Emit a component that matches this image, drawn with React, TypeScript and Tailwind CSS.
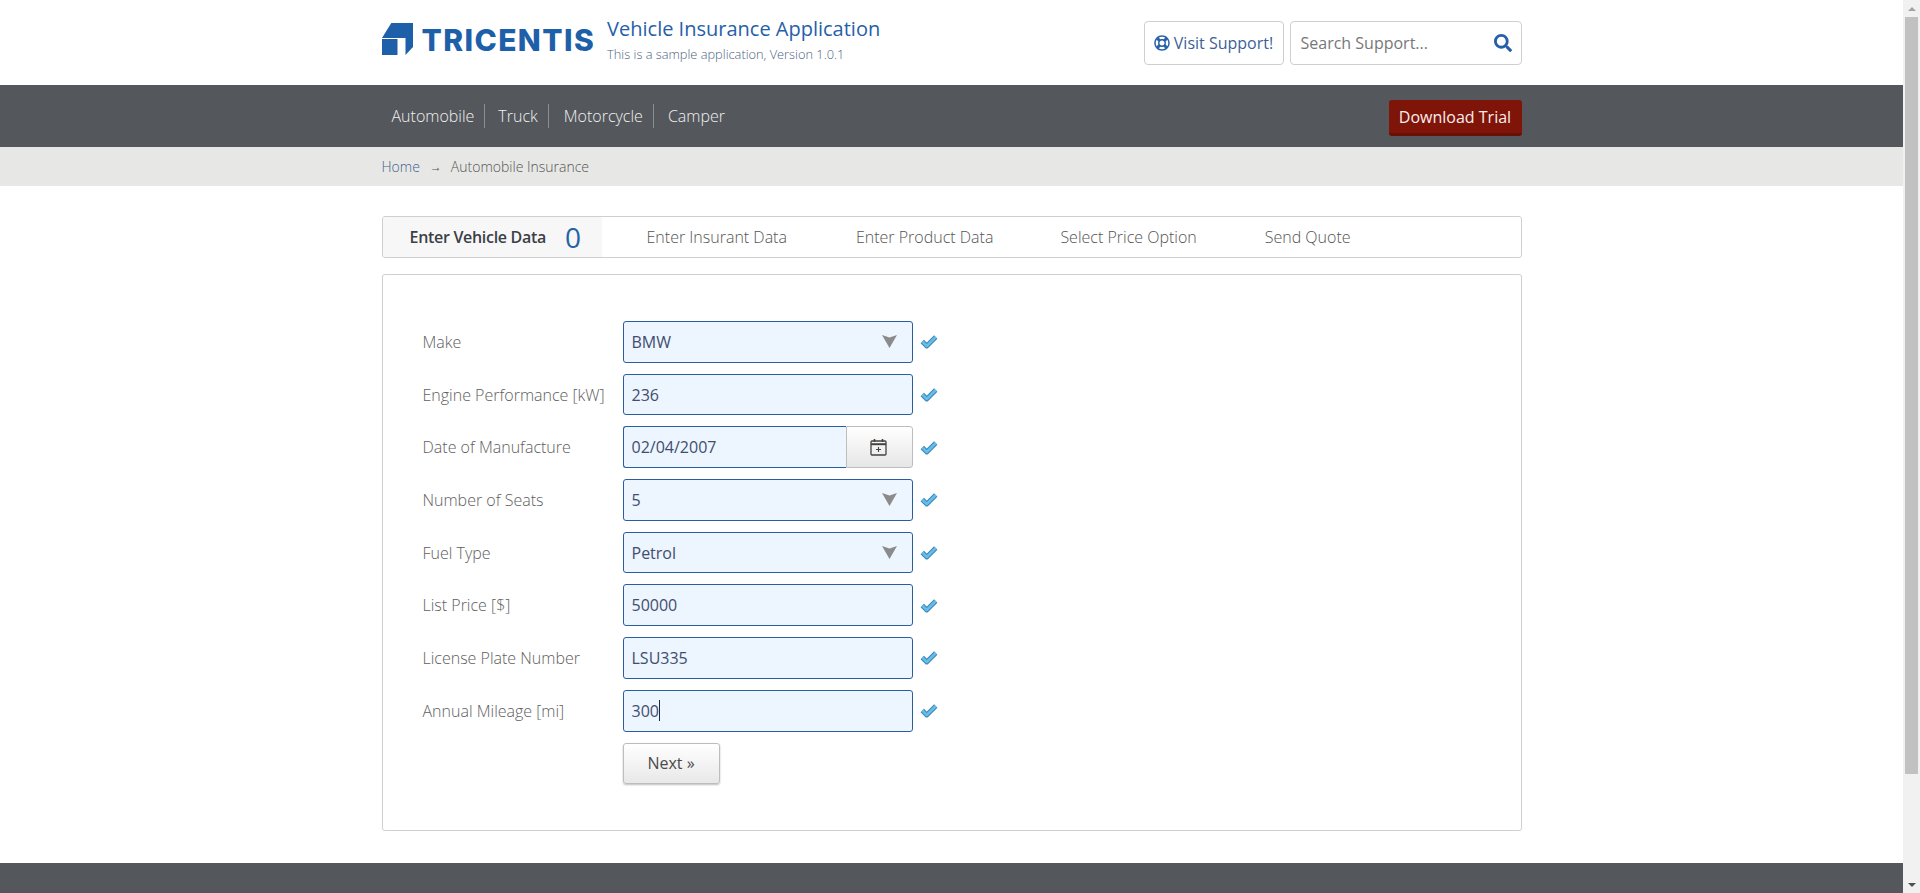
import React from 'react';
import { FaRegLifeRing, FaSearch } from 'react-icons/fa';

const tabs = [
  { label: 'Enter Insurant Data', cls: 'ml-[45px]' },
  { label: 'Enter Product Data', cls: 'ml-[69px]' },
  { label: 'Select Price Option', cls: 'ml-[67px]' },
  { label: 'Send Quote', cls: 'ml-[68px]' },
];

const CheckMark = () => (
  <svg width="18" height="15" viewBox="0 0 16 13" fill="none" strokeLinejoin="round" className="ml-[7px] shrink-0">
    <path d="M2 6.5 L6 10.5 L14 2.5" stroke="#3f87b5" strokeWidth="4.2" />
    <path d="M2 6.5 L6 10.5 L14 2.5" stroke="#66bdea" strokeWidth="2.2" />
  </svg>
);

const Arrow = () => (
  <svg width="15" height="13" viewBox="0 0 15 13" className="absolute right-[15px] top-[13px]">
    <path d="M0 0 L7.5 2.5 L15 0 L7.5 13 Z" fill="#8b8b8b" />
  </svg>
);

const CalendarIcon = () => (
  <svg width="17" height="18" viewBox="0 0 17 18" fill="none" stroke="#45423f">
    <rect x="1" y="3" width="15" height="14" rx="1" strokeWidth="1.3" />
    <path d="M1 6.2 H16" strokeWidth="2" />
    <path d="M4.5 1 V4 M12.5 1 V4" strokeWidth="1.6" />
    <path d="M8.5 9 V14 M6 11.5 H11" strokeWidth="1.1" />
  </svg>
);

const Label = ({ children }: { children: React.ReactNode }) => (
  <label className="w-[239px] shrink-0 pl-[39px] text-[16px] font-light text-[#5e5e5e]">{children}</label>
);

const fieldCls = 'relative flex h-[41.7px] w-[290px] items-center rounded-[3px] border border-[#2a5e9f] bg-[#edf5fe] pl-[8px] text-[16px] text-[#3f4e6e]';

const SelectRow = ({ label, value }: { label: string; value: string }) => (
  <div className="flex items-center">
    <Label>{label}</Label>
    <div className={fieldCls}>
      {value}
      <Arrow />
    </div>
    <CheckMark />
  </div>
);

const TextRow = ({ label, value, caret }: { label: string; value: string; caret?: boolean }) => (
  <div className="flex items-center">
    <Label>{label}</Label>
    <div className={fieldCls}>
      {value}
      {caret && <span className="h-[21px] w-px bg-[#1b2a44]" />}
    </div>
    <CheckMark />
  </div>
);

export default function App() {
  return (
    <div className="flex h-[893px] overflow-hidden bg-white font-['Open_Sans',sans-serif]">
      <div className="flex min-w-0 flex-1 flex-col">
        {/* Header */}
        <header className="h-[85px] shrink-0">
          <div className="mx-auto flex h-full w-[1140px] items-center justify-between">
            <div className="flex items-center pb-[6px]">
              <svg width="32" height="33" viewBox="0 0 32 33" className="shrink-0">
                <path d="M9.3 0 H31 V24 L23.5 32 V15 H0 Z" fill="#1e5fa9" />
                <rect x="0" y="16" width="15.5" height="16" fill="#1e5fa9" />
              </svg>
              <span className="ml-[8px] font-['Inter',sans-serif] text-[30px] leading-none font-extrabold tracking-[1.4px] text-[#1e5fa9]">TRICENTIS</span>
              <div className="mb-[2px] ml-[12px] flex flex-col">
                <span className="text-[20px] leading-[27px] text-[#2560a8]">Vehicle Insurance Application</span>
                <span className="mt-[4px] text-[12.8px] leading-[16px] font-light text-[#4d5f80]">This is a sample application, Version 1.0.1</span>
              </div>
            </div>
            <div className="flex items-center gap-[6px]">
              <a className="flex h-[44px] w-[140px] items-center justify-center gap-[4px] rounded-[4px] border border-[#cfcfcf] text-[16px] text-[#3d5f98]">
                <FaRegLifeRing className="text-[16px] text-[#2a62aa]" />
                Visit Support!
              </a>
              <div className="relative flex h-[44px] w-[232px] items-center rounded-[4px] border border-[#cfcfcf] pl-[10px] text-[16px] text-[#777777]">
                Search Support...
                <FaSearch className="absolute right-[9px] top-[12px] text-[18px] text-[#2560a8]" />
              </div>
            </div>
          </div>
        </header>

        {/* Nav */}
        <nav className="h-[62px] shrink-0 bg-[#54575c]">
          <div className="mx-auto flex h-full w-[1140px] items-center justify-between">
            <ul className="flex items-center pl-[10px] text-[16px] font-light text-[#f1f1f1]">
              <li className="flex h-[24px] items-center border-r border-[#8c8e91] pr-[10px]">Automobile</li>
              <li className="flex h-[24px] items-center border-r border-[#8c8e91] pr-[10px] pl-[13px]">Truck</li>
              <li className="flex h-[24px] items-center border-r border-[#8c8e91] pr-[10px] pl-[15px]">Motorcycle</li>
              <li className="flex h-[24px] items-center pl-[14px]">Camper</li>
            </ul>
            <button className="mt-[4px] h-[36px] w-[133px] rounded-[3px] border-b-[3px] border-[#6b0f05] bg-[#7f1408] text-[16px] text-[#fbeeee]">Download Trial</button>
          </div>
        </nav>

        {/* Breadcrumb */}
        <div className="h-[39px] shrink-0 bg-[#e7e7e5]">
          <div className="mx-auto flex h-full w-[1140px] items-center text-[14px] font-light">
            <span className="text-[#3e5f8e]">Home</span>
            <span className="ml-[10px] text-[12px] text-[#555555]">→</span>
            <span className="ml-[9px] text-[#555555]">Automobile Insurance</span>
          </div>
        </div>

        {/* Content */}
        <main className="mx-auto w-[1140px] flex-1 pt-[30px]">
          <div className="flex h-[42px] items-center overflow-hidden rounded-[3px] border border-[#cfcfcf] text-[16px]">
            <div className="flex h-full w-[219px] items-center bg-[#f7f7f7] pl-[27px]">
              <span className="font-semibold tracking-[-0.3px] text-[#3b3f46]">Enter Vehicle Data</span>
              <span className="ml-[19px] text-[28px] leading-none font-medium text-[#2463a6]">0</span>
            </div>
            {tabs.map((t) => (
              <span key={t.label} className={`font-light text-[#555555] ${t.cls}`}>{t.label}</span>
            ))}
          </div>

          <div className="mt-[16px] flex h-[557px] flex-col gap-[11px] rounded-[3px] border border-[#cfcfcf] pt-[46px] pl-[1px]">
            <SelectRow label="Make" value="BMW" />
            <TextRow label="Engine Performance [kW]" value="236" />
            <div className="flex items-center">
              <Label>Date of Manufacture</Label>
              <div className="flex h-[41.7px] w-[290px]">
                <div className="flex flex-1 items-center rounded-l-[3px] border border-r-0 border-[#2a5e9f] bg-[#edf5fe] pl-[8px] text-[16px] text-[#3f4e6e]">02/04/2007</div>
                <div className="flex w-[67px] items-center justify-center rounded-r-[3px] border border-[#bdbdbd] bg-gradient-to-b from-white to-[#e6e6e6] pr-[2px]">
                  <CalendarIcon />
                </div>
              </div>
              <CheckMark />
            </div>
            <SelectRow label="Number of Seats" value="5" />
            <SelectRow label="Fuel Type" value="Petrol" />
            <TextRow label="List Price [$]" value="50000" />
            <TextRow label="License Plate Number" value="LSU335" />
            <TextRow label="Annual Mileage [mi]" value="300" caret />
            <div className="pl-[239px]">
              <button className="h-[41px] w-[97px] rounded-[3px] border border-[#bdbdbd] bg-gradient-to-b from-white to-[#e8e8e8] text-[16px] text-[#4a4a4a] shadow-[0_1px_2px_rgba(0,0,0,0.25)]">Next »</button>
            </div>
          </div>
        </main>

        {/* Footer */}
        <footer className="h-[30px] shrink-0 bg-[#54575c]" />
      </div>

      {/* Scrollbar */}
      <div className="flex h-full w-[17px] shrink-0 flex-col items-center bg-[#f1f1f1]">
        <div className="flex h-[17px] w-full items-center justify-center">
          <div className="h-0 w-0 border-x-[4px] border-b-[4px] border-x-transparent border-b-[#a3a3a3]" />
        </div>
        <div className="h-[757px] w-[13px] bg-[#c1c1c1]" />
        <div className="flex flex-1 items-end justify-center pb-[6px]">
          <div className="h-0 w-0 border-x-[4px] border-t-[4px] border-x-transparent border-t-[#505050]" />
        </div>
      </div>
    </div>
  );
}
